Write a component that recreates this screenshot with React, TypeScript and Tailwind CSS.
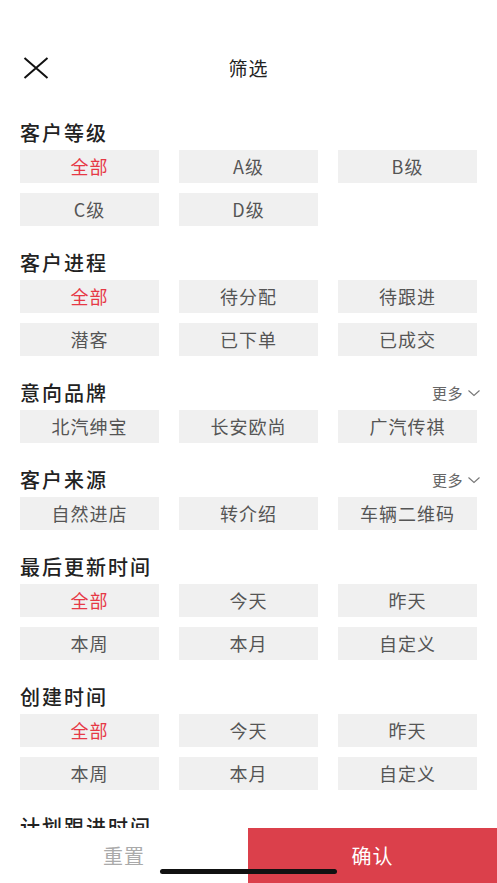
import React from "react"

type Section = {
  title: string
  options: string[]
  more?: boolean
  selected?: number
}

const sections: Section[] = [
  { title: "客户等级", options: ["全部", "A级", "B级", "C级", "D级"], selected: 0 },
  { title: "客户进程", options: ["全部", "待分配", "待跟进", "潜客", "已下单", "已成交"], selected: 0 },
  { title: "意向品牌", options: ["北汽绅宝", "长安欧尚", "广汽传祺"], more: true },
  { title: "客户来源", options: ["自然进店", "转介绍", "车辆二维码"], more: true },
  { title: "最后更新时间", options: ["全部", "今天", "昨天", "本周", "本月", "自定义"], selected: 0 },
  { title: "创建时间", options: ["全部", "今天", "昨天", "本周", "本月", "自定义"], selected: 0 },
  { title: "计划跟进时间", options: ["全部", "今天", "昨天", "本周", "本月", "自定义"], selected: 0 },
]

function CloseIcon() {
  return (
    <svg width="26" height="22" viewBox="0 0 26 22" fill="none">
      <path d="M1.5 1 L24.5 21 M24.5 1 L1.5 21" stroke="#111" strokeWidth="2" />
    </svg>
  )
}

function Chevron() {
  return (
    <svg width="14" height="10" viewBox="0 0 14 10" fill="none">
      <path d="M1.5 2.5 L7 7.5 L12.5 2.5" stroke="#777" strokeWidth="1.1" />
    </svg>
  )
}

export default function App() {
  return (
    <div
      className="relative flex h-[883px] w-full flex-col overflow-hidden bg-white"
      style={{ fontFamily: '"Noto Sans CJK SC", "Noto Sans", sans-serif' }}
    >
      <div className="h-[44px] shrink-0" />
      <div className="relative flex h-[48px] shrink-0 items-center justify-center">
        <button className="absolute left-[23px] top-[13px]">
          <CloseIcon />
        </button>
        <span className="text-[19px] leading-[24px] tracking-[1px] text-[#222]">筛选</span>
      </div>

      <div className="min-h-0 flex-1 overflow-hidden">
        <div className="flex flex-col gap-[25px] px-5 pt-[29px]">
          {sections.map((section, i) => (
            <div key={i}>
              <div className="mb-[5px] flex h-[24px] items-center justify-between">
                <span className="text-[20px] font-medium leading-[24px] tracking-[2px] text-[#222]">
                  {section.title}
                </span>
                {section.more && (
                  <span className="-mr-[4px] flex items-center gap-[4px] text-[15px] tracking-[0.5px] text-[#666]">
                    更多
                    <Chevron />
                  </span>
                )}
              </div>
              <div className="grid grid-cols-3 gap-x-5 gap-y-[10px]">
                {section.options.map((opt, j) => (
                  <div
                    key={j}
                    className={
                      "flex h-[33px] items-center justify-center bg-[#f0f0f0] text-[18px] tracking-[1px] " +
                      (section.selected === j ? "text-[#e63946]" : "text-[#555]")
                    }
                  >
                    {opt}
                  </div>
                ))}
              </div>
            </div>
          ))}
        </div>
      </div>

      <div className="flex h-[55px] shrink-0">
        <button className="flex w-[248px] items-center justify-center bg-white text-[20px] tracking-[1px] text-[#aaa]">
          重置
        </button>
        <button className="flex flex-1 items-center justify-center bg-[#db404b] text-[20px] tracking-[1px] text-white">
          确认
        </button>
      </div>
      <div className="absolute bottom-[9px] left-[160px] h-[5px] w-[177px] rounded-full bg-[#111]" />
    </div>
  )
}
